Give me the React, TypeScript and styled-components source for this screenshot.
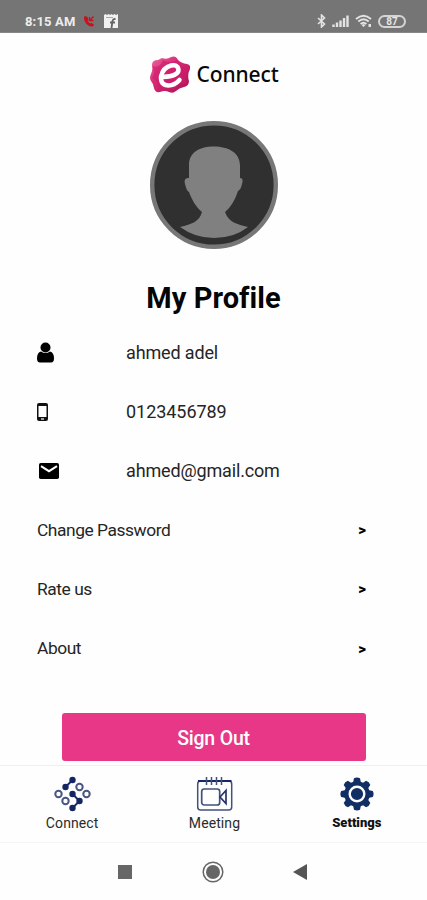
import React from 'react';
import styled, { createGlobalStyle } from 'styled-components';

const GlobalStyle = createGlobalStyle`
  *, *::before, *::after { box-sizing: border-box; }
  body { margin: 0; background: #fefefe; font-family: Roboto, sans-serif; color: #111; }
  svg { display: block; flex: none; }
  button { font-family: inherit; }
`;

const Screen = styled.div`
  width: 427px;
  height: 900px;
  display: flex;
  flex-direction: column;
  overflow: hidden;
  background: #fefefe;
`;

const StatusBar = styled.header`
  height: 33px;
  flex: none;
  display: flex;
  justify-content: space-between;
  align-items: flex-start;
  padding: 13px 21px 0 25px;
  background: #757575;
  border-bottom: 1px solid #888;
`;

const StatusGroup = styled.div<{ $gap: number }>`
  display: flex;
  align-items: center;
  height: 16px;
  gap: ${(p) => p.$gap}px;
`;

const Clock = styled.span`
  width: 51px;
  padding-top: 1px;
  font-size: 13px;
  font-weight: 700;
  line-height: 16px;
  letter-spacing: 0.15px;
  color: #ededed;
  white-space: nowrap;
`;

const Battery = styled.span`
  width: 28px;
  height: 13px;
  border: 2px solid #d4d4d4;
  border-radius: 6.5px;
  font-size: 10px;
  font-weight: 700;
  line-height: 10px;
  text-align: center;
  color: #e6e6e6;
`;

const Main = styled.main`
  height: 732px;
  flex: none;
  display: flex;
  flex-direction: column;
  align-items: center;
`;

const Brand = styled.div`
  display: flex;
  align-items: center;
  height: 38px;
  margin-top: 23px;
  gap: 7px;
  padding-left: 1px;
`;

const BrandName = styled.span`
  width: 82px;
  padding-bottom: 2px;
  font-family: "Noto Sans", sans-serif;
  font-size: 21px;
  font-weight: 500;
  line-height: 36px;
  letter-spacing: -0.1px;
  color: #080808;
`;

const AvatarFrame = styled.div`
  margin-top: 27px;
  height: 128px;
`;

const Title = styled.h1`
  margin: 31px 0 0;
  height: 36px;
  font-size: 29px;
  font-weight: 700;
  line-height: 36px;
  letter-spacing: 0.05px;
  color: #050505;
`;

const List = styled.div`
  width: 100%;
  margin-top: 7px;
`;

const Row = styled.div`
  display: flex;
  align-items: center;
  height: 59.2px;
  padding: 0 61px 0 37px;
  line-height: 24px;
  color: #252525;
`;

const IconSlot = styled.span`
  width: 89px;
  flex: none;
`;

const ContactText = styled.span<{ $spacing: number }>`
  flex: 1;
  font-size: 18px;
  letter-spacing: ${(p) => p.$spacing}px;
`;

const LinkText = styled.span`
  flex: 1;
  padding-bottom: 1px;
  font-size: 17.4px;
  letter-spacing: -0.45px;
`;

const Arrow = styled.span`
  font-size: 15px;
  font-weight: 900;
  line-height: 20px;
  color: #000;
`;

const SignOut = styled.button`
  width: 304px;
  height: 48px;
  margin-top: 34.8px;
  padding: 3px 0 0;
  border: 0;
  border-radius: 3px;
  background: #e73786;
  color: #fff;
  font-size: 19.5px;
  font-weight: 500;
  letter-spacing: -0.2px;
`;

const Tabs = styled.nav`
  height: 78px;
  flex: none;
  display: grid;
  grid-template-columns: repeat(3, 1fr);
  border-top: 1px solid #f0f0f3;
  border-bottom: 1px solid #f4f4f4;
`;

const Tab = styled.div<{ $active?: boolean }>`
  display: flex;
  flex-direction: column;
  align-items: center;
  padding: 10px 0 0 2px;
  font-size: ${(p) => (p.$active ? 13 : 14)}px;
  font-weight: ${(p) => (p.$active ? 900 : 400)};
  letter-spacing: ${(p) => (p.$active ? 0 : 0.1)}px;
  line-height: 18px;
  color: ${(p) => (p.$active ? '#111' : '#2b2b2b')};
`;

const TabLabel = styled.span`
  margin-top: 2px;
`;

const SystemBar = styled.footer`
  height: 57px;
  flex: none;
  display: flex;
  justify-content: space-between;
  align-items: center;
  padding: 1px 120px 0 118px;
`;

const MissedCall = () => (
  <svg width="13" height="13" viewBox="0 0 13 13">
    <path d="M2 1 4.500 2 5.500 5 4.500 6 7 8.500 8.500 8 11 9.500 10 11.500C5 12 .5 7 1 2Z" fill="#c9101c" />
    <path d="M6.500 2v3.500h4M7 5l3.500-3.500" fill="none" stroke="#c9101c" strokeWidth="1.300" />
  </svg>
);

const NoteBadge = () => (
  <svg width="16" height="16" viewBox="0 0 16 16">
    <path d="M1 2l1.500-1L4 2l1.500-1L7 2l1.500-1L10 2l1.500-1L13 2l2-1v14H1Z" fill="#f1f1f1" />
    <path d="M12.500 6H11.500q-1.500 0-2 2L8.500 15M7 9.500h5" fill="none" stroke="#666" strokeWidth="1.800" />
    <path d="M3 4.500h7" stroke="#aaa" strokeWidth="1" />
  </svg>
);

const Bluetooth = () => (
  <svg width="9" height="14" viewBox="0 0 9 14">
    <path d="m1 4 6.500 6-3 3V1l3 3L1 10" fill="none" stroke="#e3e3e3" strokeWidth="1.600" />
  </svg>
);

const Signal = () => (
  <svg width="17" height="14" viewBox="0 0 17 14">
    <path d="M1.500 10.500v2.500M5 8.500V13M8.500 6.500V13M12 4v9M15.500 1.500V13" stroke="#e3e3e3" strokeWidth="2.400" />
  </svg>
);

const Wifi = () => (
  <svg width="17" height="14" viewBox="0 0 17 14">
    <path d="M1 5Q8.500-1.500 16 5M3.300 7.500q5.200-4.500 10.400 0M5.600 10q2.900-2.500 5.800 0" fill="none" stroke="#e3e3e3" strokeWidth="1.900" />
    <path d="m6.500 11 2-1 2 1-2 2ZM13.500 10h2.500v3h-2.500Z" fill="#e3e3e3" />
  </svg>
);

const Logo = () => (
  <svg width="40" height="38" viewBox="0 0 40 38">
    <defs>
      <linearGradient id="petal" x1="0" y1="0" x2="1" y2="1">
        <stop offset="0" stopColor="#ef6c9f" />
        <stop offset=".4" stopColor="#d72b77" />
        <stop offset="1" stopColor="#a90f50" />
      </linearGradient>
    </defs>
    <path d="M12 2Q17 4 21 1q5-2 7 3 3 3 9 4 4 1 3 5-3 6-1 12 0 5-5 6-5 1-8 4-3 3-7 1-4-2-9 0-5 1-6-4-1-5-3-7-2-3 0-7 2-4 1-9 0-5 6-5Q10 3 12 2Z" fill="url(#petal)" />
    <path d="M2 10q8 3 11-6Q21 8 28 4q3 10 11 8-6 8-2 16-9-2-13 6-8-5-16 0 1-9-6-12 4-6 0-12Z" fill="#cf1d6b" opacity=".65" />
    <path d="M13 21Q29 20 28.500 13.500 27.500 8 21 9.500q-8 2-10 11-.5 9 7.500 9 6 0 11-5.500" fill="none" stroke="#fff" strokeWidth="4.500" strokeLinecap="round" />
  </svg>
);

const Avatar = () => (
  <svg width="128" height="128" viewBox="0 0 128 128">
    <circle cx="64" cy="64" r="61.800" fill="#303030" stroke="#777" strokeWidth="4.400" />
    <path d="M39 57V44C39 31 50 25.500 64 25.500s26 6 26 19V57c3 0 3 3 2 6-1 4-2 6-4 7-3 9-7 16-13 21 4 11 12 12 23 15Q84 117 64 117q-19 0-34-11c12-3 19-5 22-15-6-5-10-12-13-20-2-1-3-4-4-8s0-6 4-6Z" fill="#808080" />
  </svg>
);

const Person = () => (
  <svg width="17" height="21" viewBox="0 0 17 21">
    <circle cx="8.500" cy="5.500" r="5" fill="#000" />
    <path d="M4 9.500q4.500 3 9 0 4 1 4 7 0 4-3 4H3q-3 0-3-4Q0 10.500 4 9.500Z" fill="#000" />
  </svg>
);

const Phone = () => (
  <svg width="11" height="18" viewBox="0 0 11 18">
    <rect width="11" height="18" rx="2" fill="#111" />
    <path d="M1.500 3h8v11h-8Z" fill="#fefefe" />
    <path d="M4 16h3" stroke="#eee" strokeWidth="1.300" />
  </svg>
);

const Mail = () => (
  <svg width="22" height="16" viewBox="0 0 22 16">
    <rect x="2" width="20" height="16" rx="1.800" fill="#000" />
    <path d="m4 3.200 8 5 8-5" fill="none" stroke="#fefefe" strokeWidth="2" />
  </svg>
);

const NetworkIcon = () => (
  <svg width="37" height="36" viewBox="0 0 37 36">
    <path d="m18.500 4-7 7m7 7 7 7-7 7" fill="none" stroke="#1d2c64" strokeWidth="2" />
    <g fill="#152763">
      <circle cx="18.500" cy="4" r="3.200" />
      <circle cx="11.500" cy="11" r="3.200" />
      <circle cx="18.500" cy="18" r="3.200" />
      <circle cx="25.500" cy="25" r="3.200" />
      <circle cx="18.500" cy="32" r="3.200" />
    </g>
    <g fill="none" stroke="#4a5680" strokeWidth="2">
      <circle cx="25.500" cy="11" r="3.200" />
      <circle cx="32.500" cy="18" r="3.200" />
      <circle cx="4.500" cy="18" r="3.200" />
      <circle cx="11.500" cy="25" r="3.200" />
    </g>
  </svg>
);

const MeetingIcon = () => (
  <svg width="37" height="36" viewBox="0 0 37 36">
    <rect x="1.700" y="5" width="34" height="29" rx="3" fill="none" stroke="#43527b" strokeWidth="1.500" />
    <path d="M2 5h33.500" stroke="#152763" strokeWidth="1.800" />
    <path d="M10.500 1v8M15.500 1v8M20.500 1v8M25.500 1v8" stroke="#43527b" strokeWidth="1.500" />
    <rect x="5.700" y="13" width="18" height="16" rx="2.500" fill="none" stroke="#43527b" strokeWidth="1.700" />
    <path d="m24 21 6-6.500v13Z" fill="none" stroke="#253568" strokeWidth="1.700" />
  </svg>
);

const teeth = [0, 45, 90, 135, 180, 225, 270, 315];
const GearIcon = () => (
  <svg width="34" height="36" viewBox="0 0 34 36">
    <g fill="#112e65">
      {teeth.map((angle) => (
        <path key={angle} d="M13 7 14 2.200q3-1.600 6 0L21 7Z" transform={`rotate(${angle} 17 18)`} />
      ))}
      <circle cx="17" cy="18" r="12.800" />
    </g>
    <circle cx="17" cy="18" r="7.300" fill="#112e65" stroke="#fefefe" strokeWidth="2.400" />
  </svg>
);

const contacts = [
  { icon: <Person />, text: 'ahmed adel', spacing: -0.15 },
  { icon: <Phone />, text: '0123456789', spacing: -0.05 },
  { icon: <Mail />, text: 'ahmed@gmail.com', spacing: -0.15 },
];
const links = ['Change Password', 'Rate us', 'About'];

export default function App() {
  return (
    <>
      <GlobalStyle />
      <Screen>
        <StatusBar>
          <StatusGroup $gap={7}>
            <Clock>8:15 AM</Clock>
            <MissedCall />
            <NoteBadge />
          </StatusGroup>
          <StatusGroup $gap={6}>
            <Bluetooth />
            <Signal />
            <Wifi />
            <Battery>87</Battery>
          </StatusGroup>
        </StatusBar>
        <Main>
          <Brand>
            <Logo />
            <BrandName>Connect</BrandName>
          </Brand>
          <AvatarFrame><Avatar /></AvatarFrame>
          <Title>My Profile</Title>
          <List>
            {contacts.map((c) => (
              <Row key={c.text}>
                <IconSlot>{c.icon}</IconSlot>
                <ContactText $spacing={c.spacing}>{c.text}</ContactText>
              </Row>
            ))}
            {links.map((label) => (
              <Row key={label}>
                <LinkText>{label}</LinkText>
                <Arrow>&gt;</Arrow>
              </Row>
            ))}
          </List>
          <SignOut>Sign Out</SignOut>
        </Main>
        <Tabs>
          <Tab><NetworkIcon /><TabLabel>Connect</TabLabel></Tab>
          <Tab><MeetingIcon /><TabLabel>Meeting</TabLabel></Tab>
          <Tab $active><GearIcon /><TabLabel>Settings</TabLabel></Tab>
        </Tabs>
        <SystemBar>
          <svg width="14" height="14" viewBox="0 0 14 14"><path d="M0 0h14v14H0Z" fill="#666" /></svg>
          <svg width="22" height="22" viewBox="0 0 22 22">
            <circle cx="11" cy="11" r="9.800" fill="none" stroke="#666" strokeWidth="1.500" />
            <circle cx="11" cy="11" r="7" fill="#666" />
          </svg>
          <svg width="14" height="16" viewBox="0 0 14 16"><path d="M0 8 14 0v16Z" fill="#555" /></svg>
        </SystemBar>
      </Screen>
    </>
  );
}
